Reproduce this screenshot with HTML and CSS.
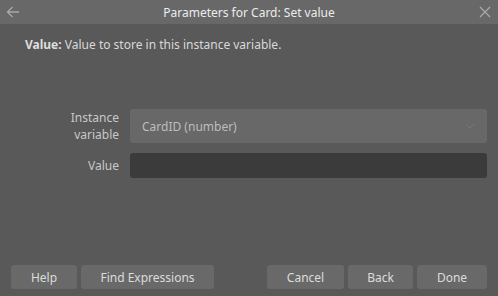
FILE: index.html
```html
<!DOCTYPE html>
<html lang="en">
<head>
    <meta charset="UTF-8">
    <title>Parameters for Card: Set value</title>
    <link rel="stylesheet" href="styles.css">
</head>
<body>
    <div class="dialog">
        <!-- Title bar -->
        <div class="titlebar">
            <span class="icon-btn">
                <svg width="14" height="12" viewBox="0 0 14 12"><path d="M13 6H1.5M6.5 1L1.5 6l5 5" fill="none" stroke="#a8a8a8" stroke-width="1.3"/></svg>
            </span>
            <span class="title">Parameters for Card: Set value</span>
            <span class="icon-btn">
                <svg width="12" height="12" viewBox="0 0 12 12"><path d="M1 1l10 10M11 1L1 11" fill="none" stroke="#a8a8a8" stroke-width="1.3"/></svg>
            </span>
        </div>

        <p class="desc"><b>Value:</b> Value to store in this instance variable.</p>

        <!-- Parameters -->
        <div class="params">
            <label class="label">Instance<br>variable</label>
            <div class="select">
                <span>CardID (number)</span>
                <svg width="10" height="6" viewBox="0 0 10 6"><path d="M1 1l4 4 4-4" fill="none" stroke="#777" stroke-width="1"/></svg>
            </div>

            <label class="label">Value</label>
            <div class="input"></div>
        </div>

        <!-- Buttons -->
        <div class="buttons">
            <button class="btn btn-help">Help</button>
            <button class="btn btn-find">Find Expressions</button>
            <span class="spacer"></span>
            <button class="btn btn-cancel">Cancel</button>
            <button class="btn btn-back">Back</button>
            <button class="btn btn-done">Done</button>
        </div>
    </div>
</body>
</html>
```

FILE: styles.css
```css
body {
    margin: 0;
    font-family: "Noto Sans", "Open Sans", sans-serif;
    font-size: 12px;
    background-color: #595959;
    color: #d0d0d0;
}

.dialog {
    width: 498px;
    height: 296px;
    display: flex;
    flex-direction: column;
}

.titlebar {
    height: 24px;
    background-color: #686868;
    display: flex;
    align-items: center;
    justify-content: space-between;
    padding: 0 6px;
}

.icon-btn {
    width: 14px;
    height: 14px;
    display: flex;
    align-items: center;
    justify-content: center;
}

.title {
    color: #ececec;
    font-size: 12px;
}

.desc {
    margin: 12px 0 0 25px;
    line-height: 18px;
    color: #d8d8d8;
}

.desc b {
    color: #dedede;
}

.params {
    margin: 55px 11px 0 0;
    display: grid;
    grid-template-columns: 119px 1fr;
    column-gap: 11px;
    row-gap: 10px;
    align-items: center;
}

.label {
    text-align: right;
    line-height: 17px;
    color: #c8c8c8;
}

.select {
    height: 34px;
    background-color: #686868;
    border-radius: 3px;
    display: flex;
    align-items: center;
    justify-content: space-between;
    padding: 0 12px;
    color: #bdbdbd;
}

.input {
    height: 25px;
    background-color: #3b3b3b;
    border-radius: 3px;
}

.buttons {
    margin-top: auto;
    display: flex;
    gap: 4px;
    padding: 0 11px 7px 11px;
}

.spacer {
    flex: 1;
}

.btn {
    height: 24px;
    background-color: #696969;
    color: #dcdcdc;
    border: none;
    border-radius: 3px;
    font-family: inherit;
    font-size: 12px;
    padding: 0;
}

.btn-help { width: 66px; }
.btn-find { width: 133px; }
.btn-cancel { width: 77px; }
.btn-back { width: 65px; }
.btn-done { width: 70px; }
```
